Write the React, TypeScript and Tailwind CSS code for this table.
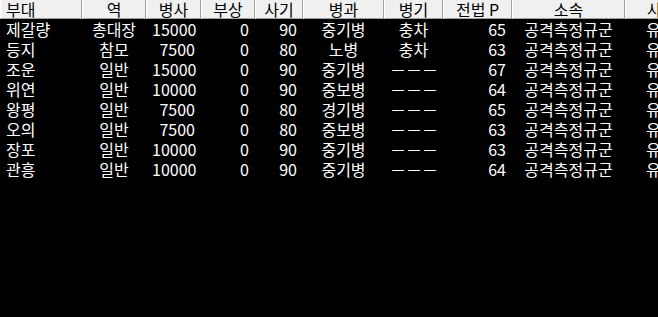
const columns = [
  { title: "부대", head: "text-left", body: "text-left" },
  { title: "역", head: "text-center", body: "text-center" },
  { title: "병사", head: "text-center", body: "text-right" },
  { title: "부상", head: "text-center", body: "text-right" },
  { title: "사기", head: "text-center", body: "text-right" },
  { title: "병과", head: "text-center", body: "text-center" },
  { title: "병기", head: "text-center", body: "text-center" },
  { title: "전법 P", head: "text-center", body: "text-right" },
  { title: "소속", head: "text-center", body: "text-center" },
  { title: "사용", head: "text-left pl-[21px]", body: "text-left pl-[21px]" },
];

const units = [
  ["제갈량", "총대장", "15000", "0", "90", "중기병", "충차", "65", "공격측정규군", "유비"],
  ["등지", "참모", "7500", "0", "80", "노병", "충차", "63", "공격측정규군", "유비"],
  ["조운", "일반", "15000", "0", "90", "중기병", "－－－", "67", "공격측정규군", "유비"],
  ["위연", "일반", "10000", "0", "90", "중보병", "－－－", "64", "공격측정규군", "유비"],
  ["왕평", "일반", "7500", "0", "80", "경기병", "－－－", "65", "공격측정규군", "유비"],
  ["오의", "일반", "7500", "0", "80", "중보병", "－－－", "63", "공격측정규군", "유비"],
  ["장포", "일반", "10000", "0", "90", "중기병", "－－－", "63", "공격측정규군", "유비"],
  ["관흥", "일반", "10000", "0", "90", "중기병", "－－－", "64", "공격측정규군", "유비"],
];

export default function App() {
  return (
    <div
      className="w-[658px] h-[317px] overflow-hidden bg-black text-[16px]"
      style={{ fontFamily: '"Noto Sans CJK KR", "Noto Sans", sans-serif' }}
    >
      <div className="grid grid-cols-[82px_64px_55px_54px_48px_81px_59px_69px_113px_80px] w-max">
        {columns.map((col) => (
          <div
            key={col.title}
            className={`h-[19px] leading-[18px] px-[5px] bg-[#f0f0f0] text-black whitespace-nowrap border-l border-l-white border-r border-r-[#a0a0a0] border-b border-b-[#a0a0a0] ${col.head}`}
          >
            {col.title}
          </div>
        ))}
        {units.map((row) =>
          row.map((cell, i) => (
            <div
              key={row[0] + i}
              className={`h-[20px] leading-[20px] px-[6px] text-white whitespace-nowrap ${columns[i].body}`}
            >
              {cell}
            </div>
          ))
        )}
      </div>
    </div>
  );
}
